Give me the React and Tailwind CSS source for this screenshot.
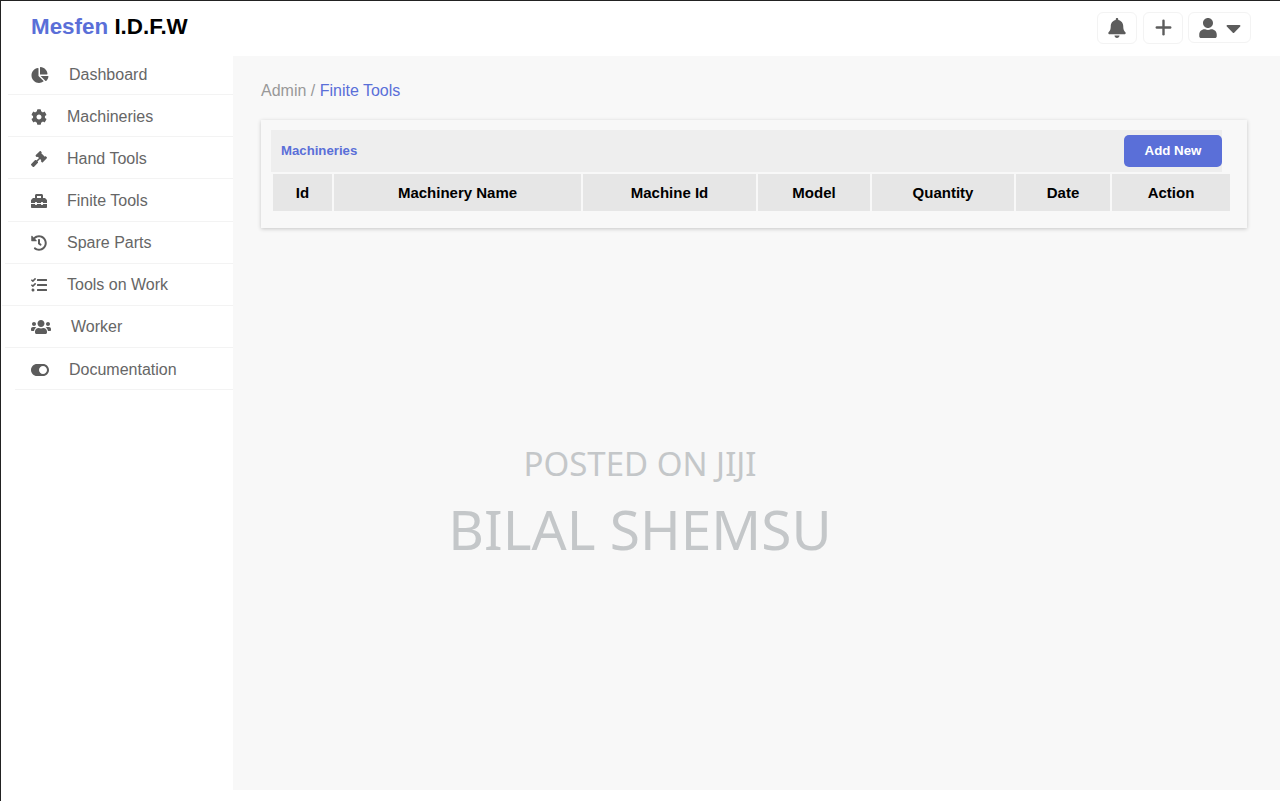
import React from 'react';
import { FaChartPie, FaCog, FaGavel, FaToolbox, FaHistory, FaTasks, FaUsers, FaToggleOn, FaBell, FaUser, FaCaretDown } from 'react-icons/fa';
import { Plus } from 'lucide-react';

const menu = [
  { label: 'Dashboard', icon: FaChartPie, size: 'h-[16px] w-[18px]', line: 'ml-[7px]' },
  { label: 'Machineries', icon: FaCog, size: 'h-[16px] w-[16px]', line: 'ml-[7px]' },
  { label: 'Hand Tools', icon: FaGavel, size: 'h-[16px] w-[16px]', line: 'ml-[7px]' },
  { label: 'Finite Tools', icon: FaToolbox, size: 'h-[16px] w-[16px]', line: 'ml-[7px]' },
  { label: 'Spare Parts', icon: FaHistory, size: 'h-[16px] w-[16px]', line: 'ml-[4px]' },
  { label: 'Tools on Work', icon: FaTasks, size: 'h-[16px] w-[16px]', line: 'ml-[1px]' },
  { label: 'Worker', icon: FaUsers, size: 'h-[16px] w-[20px]', line: 'ml-[4px]' },
  { label: 'Documentation', icon: FaToggleOn, size: 'h-[16px] w-[18px]', line: 'ml-[14px]' },
];

const columns = [
  { label: 'Id', width: 'w-[59px]' },
  { label: 'Machinery Name', width: 'w-[247px]' },
  { label: 'Machine Id', width: 'w-[173px]' },
  { label: 'Model', width: 'w-[112px]' },
  { label: 'Quantity', width: 'w-[142px]' },
  { label: 'Date', width: 'w-[94px]' },
  { label: 'Action', width: 'w-[118px]' },
];

const Sidebar = () => (
  <aside className="w-[232px] shrink-0 bg-white">
    <div className="h-[52px] pl-[30px] pt-[12px] text-[22.4px] leading-[28px] font-bold text-black">
      <span className="text-[#5a6fd8]">Mesfen</span> I.D.F.W
    </div>
    {menu.map((item) => (
      <div key={item.label} className="relative h-[42.15px]">
        <div className="flex h-full items-center pt-[1px] pl-[30px] text-[16px] text-[#666666]">
          <item.icon className={`mr-5 text-[#5c5c5c] ${item.size}`} />
          <span>{item.label}</span>
        </div>
        <div className={`absolute right-0 bottom-0 left-0 h-px bg-[#f3f3f3] ${item.line}`}></div>
      </div>
    ))}
  </aside>
);

const Header = () => (
  <header className="flex h-[55px] items-center justify-end gap-[5px] bg-white pr-[29px] pb-[2px] text-[#5c5c5c]">
    <button className="mr-px flex h-[32px] w-[40px] items-center justify-center rounded-md border border-[#f3f3f3] bg-white">
      <FaBell className="h-[20px] w-[18px]" />
    </button>
    <button className="flex h-[32px] w-[40px] items-center justify-center rounded-md border border-[#f3f3f3] bg-white">
      <Plus size={23} strokeWidth={2.5} />
    </button>
    <button className="flex h-[31px] w-[63px] items-center justify-center gap-[9px] rounded-md border border-[#f3f3f3] bg-white">
      <FaUser className="h-[20px] w-[18px]" />
      <FaCaretDown className="h-[24px] w-[15px]" />
    </button>
  </header>
);

const Card = () => (
  <div className="mr-[33px] ml-[28px] h-[108px] bg-[#f8f8f8] pt-[10px] pl-[10px] shadow-[0_1px_4px_rgba(0,0,0,0.2)]">
    <div className="flex h-[42px] w-[951px] items-center justify-between bg-[#eeeeee] pl-[10px]">
      <span className="text-[13.2px] font-bold text-[#5a6fd8]">Machineries</span>
      <button className="h-[32px] w-[98px] rounded-[5px] bg-[#5a6fd8] text-[13.3px] font-bold text-white">Add New</button>
    </div>
    <div className="mt-[2px] ml-[2px] flex h-[37px] gap-[2px]">
      {columns.map((col) => (
        <div key={col.label} className={`flex items-center justify-center bg-[#e6e6e6] pt-[1px] text-[15px] font-bold text-black ${col.width}`}>
          {col.label}
        </div>
      ))}
    </div>
  </div>
);

const App = () => (
  <div className="relative h-[801px] w-[1280px] overflow-hidden border-t border-l border-t-[#222222] border-l-[#222222] bg-white font-['Liberation_Sans',Arial,sans-serif]">
    <div className="flex h-full">
      <Sidebar />
      <div className="flex min-w-0 flex-1 flex-col pb-[11px]">
        <Header />
        <main className="flex-1 bg-[#f8f8f8]">
          <div className="pt-[25px] pb-[19px] pl-[28px] text-[16px] leading-[20px] text-[#999999]">
            Admin / <span className="text-[#5a6fd8]">Finite Tools</span>
          </div>
          <Card />
        </main>
      </div>
    </div>

    {/* watermark */}
    <div className="pointer-events-none absolute top-[439px] left-0 flex w-[1278px] flex-col items-center font-['Noto_Sans',sans-serif] text-[#c4c7c9]">
      <div className="text-[33px] leading-[48px]">POSTED ON JIJI</div>
      <div className="mt-[5px] text-[55px] leading-[72px]">BILAL SHEMSU</div>
    </div>
  </div>
);

export default App;
